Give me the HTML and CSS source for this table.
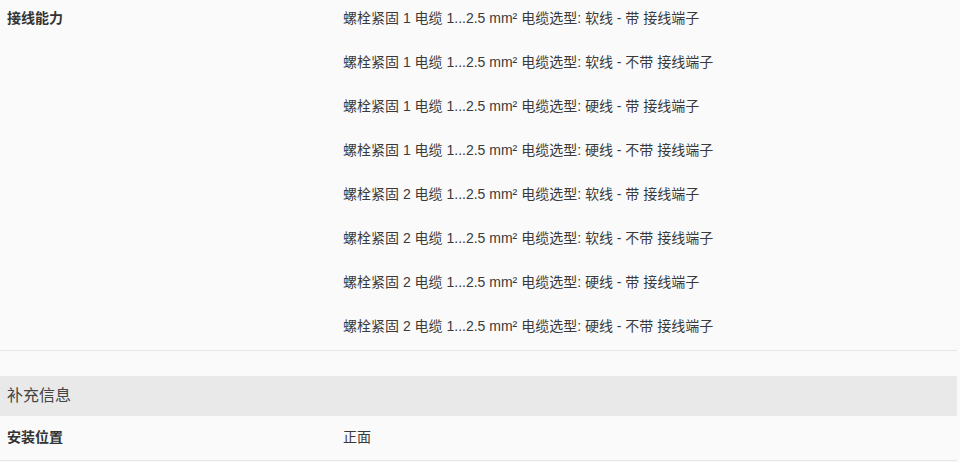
FILE: index.html
```html
<!DOCTYPE html>
<html lang="zh">
<head>
<meta charset="utf-8">
<title>规格</title>
<link rel="stylesheet" href="styles.css">
</head>
<body>
<div class="sheet">
  <div class="row row-first">
    <div class="label">接线能力</div>
    <div class="values">
      <div class="val">螺栓紧固 1 电缆 1...2.5 mm² 电缆选型: 软线 - 带 接线端子</div>
      <div class="val">螺栓紧固 1 电缆 1...2.5 mm² 电缆选型: 软线 - 不带 接线端子</div>
      <div class="val">螺栓紧固 1 电缆 1...2.5 mm² 电缆选型: 硬线 - 带 接线端子</div>
      <div class="val">螺栓紧固 1 电缆 1...2.5 mm² 电缆选型: 硬线 - 不带 接线端子</div>
      <div class="val">螺栓紧固 2 电缆 1...2.5 mm² 电缆选型: 软线 - 带 接线端子</div>
      <div class="val">螺栓紧固 2 电缆 1...2.5 mm² 电缆选型: 软线 - 不带 接线端子</div>
      <div class="val">螺栓紧固 2 电缆 1...2.5 mm² 电缆选型: 硬线 - 带 接线端子</div>
      <div class="val">螺栓紧固 2 电缆 1...2.5 mm² 电缆选型: 硬线 - 不带 接线端子</div>
    </div>
  </div>
  <div class="section-head">补充信息</div>
  <div class="row row-single">
    <div class="label">安装位置</div>
    <div class="values">
      <div class="val">正面</div>
    </div>
  </div>
</div>
</body>
</html>
```
FILE: styles.css
```css
html, body {
  margin: 0;
  padding: 0;
  background: #fafafa;
}
body {
  font-family: "Liberation Sans", Arial, "Noto Sans CJK SC", sans-serif;
  font-size: 14px;
  line-height: 20px;
  color: #333;
}
.sheet {
  width: 957px;
}
.row {
  display: grid;
  grid-template-columns: 336px 1fr;
  border-bottom: 1px solid #e6e6e6;
}
.row-first {
  padding: 8px 0 14px;
}
.row-single {
  padding: 11px 0 13px;
}
.label {
  padding-left: 7px;
  font-weight: bold;
  color: #333;
}
.values {
  display: flex;
  flex-direction: column;
  gap: 24px;
  padding-left: 7px;
}
.val {
  color: #3a3a3a;
}
.section-head {
  margin-top: 25px;
  height: 40px;
  line-height: 40px;
  background: #e9e9e9;
  padding-left: 7px;
  font-size: 16px;
  color: #444;
}
```
